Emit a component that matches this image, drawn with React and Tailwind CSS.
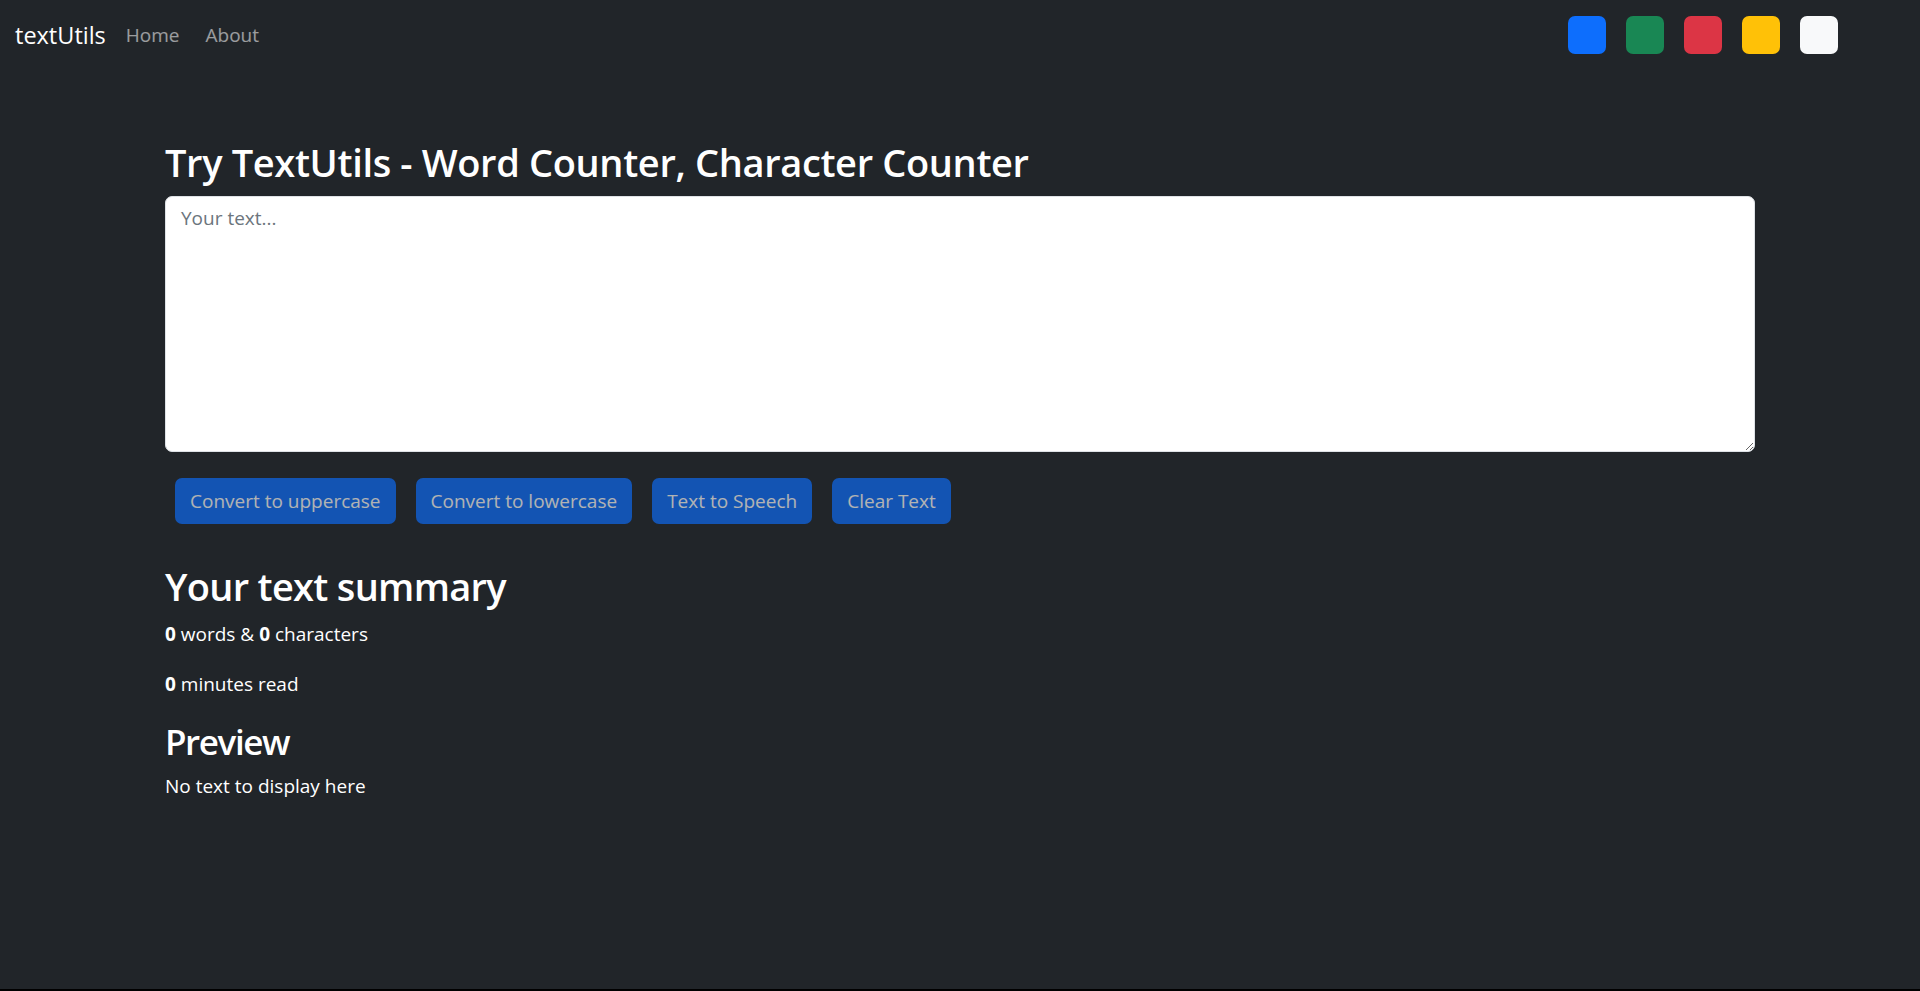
import React, { useState } from 'react';

const SWATCHES = ["#0d6efd", "#198754", "#dc3545", "#ffc107", "#f8f9fa"];

function Navbar() {
  return (
    <nav className="h-[69px] pt-[2px] flex items-center">
      <a className="ml-[15px] text-[23.5px] text-white leading-none">textUtils</a>
      <a className="ml-[20px] text-[19px] text-white/55">Home</a>
      <a className="ml-[26px] text-[19px] text-white/55">About</a>
      <div className="ml-auto mr-[82px] -mt-[2px] flex items-center gap-[20px]">
        {SWATCHES.map((c) => (
          <div key={c} className="w-[38px] h-[38px] rounded-[7px]" style={{ backgroundColor: c }} />
        ))}
      </div>
    </nav>
  );
}

export default function App() {
  const [text, setText] = useState("");
  const words = text.split(/\s+/).filter((w) => w.length).length;

  return (
    <div className="h-[991px] bg-black overflow-hidden" style={{ fontFamily: '"Segoe UI", "Open Sans", sans-serif' }}>
      <div className="h-[989px] bg-[#212529] text-white">
        <Navbar />

        <main className="px-[165px] pt-[70px]">
          <h1 className="text-[38px] leading-[47px] font-semibold tracking-[-0.35px] mb-[10px]">
            Try TextUtils - Word Counter, Character Counter
          </h1>
          <textarea
            value={text}
            onChange={(e) => setText(e.target.value)}
            placeholder="Your text..."
            className="block w-full h-[256px] bg-white text-[#212529] border border-[#dee2e6] rounded-[7px] px-[15px] py-[7px] text-[19px] leading-[29px] placeholder:text-[#6c757d] resize-y outline-none"
          />

          <div className="flex gap-[20px] mt-[26px] ml-[10px]">
            {["Convert to uppercase", "Convert to lowercase", "Text to Speech", "Clear Text"].map((label) => (
              <button
                key={label}
                disabled={text.length === 0}
                className="h-[46px] px-[15px] rounded-[7px] bg-[#0d6efd] text-white text-[19px] leading-[29px] disabled:opacity-65"
              >
                {label}
              </button>
            ))}
          </div>

          <h2 className="mt-[39px] text-[38px] leading-[47px] font-semibold tracking-[-0.7px] mb-[10px]">Your text summary</h2>
          <p className="text-[19px] leading-[29px] mb-[21px]">
            <b>{words}</b> words &amp; <b>{text.length}</b> characters
          </p>
          <p className="text-[19px] leading-[29px] mb-[20px]">
            <b>{Math.round(words * 0.008)}</b> minutes read
          </p>

          <h2 className="text-[35px] leading-[45px] font-semibold tracking-[-1.4px] mb-[8px]">Preview</h2>
          <p className="text-[19px] leading-[29px]">{text.length ? text : "No text to display here"}</p>
        </main>
      </div>
    </div>
  );
}
